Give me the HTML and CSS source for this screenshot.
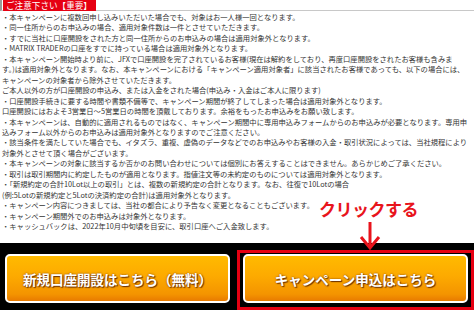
FILE: index.html
```html
<!DOCTYPE html>
<html lang="ja">
<head>
<meta charset="utf-8">
<title>ご注意下さい【重要】</title>
<link rel="stylesheet" href="styles.css">
</head>
<body>
<div class="page">
  <div class="heading"><span class="label">ご注意下さい【重要】</span></div>
  <div class="notes">
    <p>・本キャンペーンに複数回申し込みいただいた場合でも、対象はお一人様一回となります。</p>
    <p>・同一住所からのお申込みの場合、適用対象件数は一件とさせていただきます。</p>
    <p>・すでに当社に口座開設をされた方と同一住所からのお申込みの場合は適用対象外となります。</p>
    <p>・MATRIX TRADERの口座をすでに持っている場合は適用対象外となります。</p>
    <p>・本キャンペーン開始時より前に、JFXで口座開設を完了されているお客様(現在は解約をしており、再度口座開設をされたお客様も含みま<br>す。)は適用対象外となります。なお、本キャンペーンにおける「キャンペーン適用対象者」に該当されたお客様であっても、以下の場合には、<br>キャンペーンの対象者から除外させていただきます。<br>ご本人以外の方が口座開設の申込み、または入金をされた場合(申込み・入金はご本人に限ります)</p>
    <p>・口座開設手続きに要する時間や書類不備等で、キャンペーン期間が終了してしまった場合は適用対象外となります。<br>口座開設にはおよそ3営業日～5営業日の時間を頂戴しております。余裕をもったお申込みをお願い致します。</p>
    <p>・本キャンペーンは、自動的に適用されるものではなく、キャンペーン期間中に専用申込みフォームからのお申込みが必要となります。専用申<br>込みフォーム以外からのお申込みは適用対象外となりますのでご注意ください。</p>
    <p>・該当条件を満たしていた場合でも、イタズラ、重複、虚偽のデータなどでのお申込みやお客様の入金・取引状況によっては、当社規程により<br>対象外とさせて頂く場合がございます。</p>
    <p>・本キャンペーンの対象に該当するか否かのお問い合わせについては個別にお答えすることはできません。あらかじめご了承ください。</p>
    <p>・取引は取引期間内に約定したものが適用となります。指値注文等の未約定のものについては適用対象外となります。</p>
    <p>・「新規約定の合計10Lot以上の取引」とは、複数の新規約定の合計となります。なお、往復で10Lotの場合<br>(例:5Lotの新規約定と5Lotの決済約定の合計)は適用対象外となります。</p>
    <p>・キャンペーン内容につきましては、当社の都合により予告なく変更となることもございます。</p>
    <p>・キャンペーン期間外でのお申込みは対象外となります。</p>
    <p>・キャッシュバックは、2022年10月中旬頃を目安に、取引口座へご入金致します。</p>
  </div>
  <div class="cta">
    <a class="btn btn-left" href="#">新規口座開設はこちら（無料）</a>
    <div class="frame">
      <a class="btn" href="#">キャンペーン申込はこちら</a>
    </div>
  </div>
  <div class="callout">クリックする</div>
  <svg class="arrow" width="22" height="30" viewBox="0 0 22 30">
    <path d="M11 1 V27" fill="none" stroke="#e8141c" stroke-width="3"/>
    <path d="M2 16 L11 27 L20 16" fill="none" stroke="#e8141c" stroke-width="3"/>
  </svg>
</div>
</body>
</html>
```

FILE: styles.css
```css
html, body {
  margin: 0;
  padding: 0;
  background: #fff;
}
.page {
  position: relative;
  width: 474px;
  height: 310px;
  overflow: hidden;
  font-family: "Noto Sans CJK JP", "Noto Sans", sans-serif;
}
.heading {
  height: 10px;
  border-left: 2px solid #9a9a9a;
  border-bottom: 1px solid #c8c8c8;
  display: flex;
  align-items: stretch;
  padding-left: 1px;
}
.label {
  background: #e60012;
  color: #fff;
  font-size: 8.6px;
  line-height: 11px;
  height: 11px;
  padding: 0 4px 0 3px;
  white-space: nowrap;
}
.notes {
  padding: 1px 0 0 2px;
  color: #333;
  font-size: 7.3px;
  line-height: 10.45px;
  height: 231px;
}
.notes p {
  margin: 0;
  white-space: nowrap;
}
.cta {
  background: #000;
  height: 67px;
  display: flex;
  align-items: flex-start;
  padding-left: 5px;
  gap: 7px;
}
.btn {
  box-sizing: border-box;
  width: 225px;
  height: 49px;
  display: flex;
  align-items: center;
  justify-content: center;
  border: 2px solid #fff;
  border-radius: 5px;
  background: linear-gradient(#ffba00 0%, #fdaa00 45%, #f49400 85%, #e87a00 100%);
  color: #fff;
  font-weight: 700;
  font-size: 13.5px;
  text-decoration: none;
  text-shadow: 0 0 2px #7a3a00, 1px 1px 1px #6a3000;
  white-space: nowrap;
}
.btn-left {
  margin-top: 11px;
}
.frame {
  box-sizing: border-box;
  width: 237px;
  height: 60px;
  margin-top: 7px;
  border: 3px solid #e60012;
  padding: 1px 3px 4px 3px;
}
.callout {
  position: absolute;
  left: 319px;
  top: 197px;
  color: #e8141c;
  font-size: 17px;
  font-weight: 700;
  line-height: 24px;
  letter-spacing: -0.5px;
  white-space: nowrap;
}
.arrow {
  position: absolute;
  left: 359px;
  top: 221px;
}
```
